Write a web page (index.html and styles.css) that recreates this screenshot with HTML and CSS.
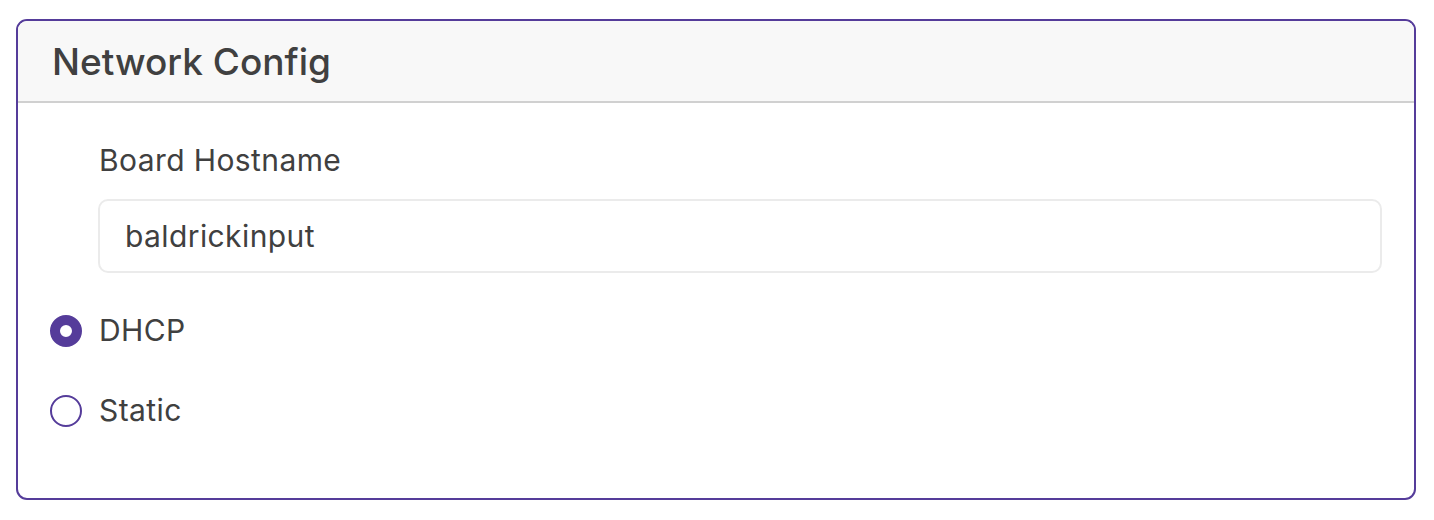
FILE: index.html
```html
<!DOCTYPE html>
<html lang="en">
<head>
  <meta charset="UTF-8" />
  <meta name="viewport" content="width=device-width, initial-scale=1.0"/>
  <title>Network Config</title>
  <link rel="stylesheet" href="styles.css">
</head>
<body>

  <div class="card">
    <div class="card-header">
      <h2>Network Config</h2>
    </div>

    <div class="card-body">
      <div class="field">
        <label for="hostname">Board Hostname</label>
        <input type="text" id="hostname" value="baldrickinput" />
      </div>

      <label class="radio">
        <input type="radio" name="mode" value="dhcp" checked />
        <span class="dot"></span>
        DHCP
      </label>

      <label class="radio">
        <input type="radio" name="mode" value="static" />
        <span class="dot"></span>
        Static
      </label>
    </div>
  </div>

</body>
</html>
```

FILE: styles.css
```css
:root {
  --accent: #553c9a;
  --text-color: #404040;
}
body {
  font-family: Inter, 'Noto Sans', sans-serif;
  color: var(--text-color);
  background: #fff;
  margin: 0;
  padding: 19px 18px 0 16px;
}
.card {
  border: 2px solid var(--accent);
  border-radius: 11px;
  overflow: hidden;
  height: 481px;
  box-sizing: border-box;
}
.card-header {
  background: #f8f8f8;
  border-bottom: 2px solid #d0d0d0;
  height: 80px;
  display: flex;
  align-items: center;
  padding: 0 34px;
}
.card-header h2 {
  margin: 0;
  font-size: 37px;
  font-weight: 500;
  letter-spacing: 0;
}
.card-body {
  padding: 35px 32px 0 32px;
  display: flex;
  flex-direction: column;
  gap: 35px;
  font-size: 30px;
  line-height: 45px;
  letter-spacing: 0.4px;
}
.field {
  margin-left: 48px;
  display: flex;
  flex-direction: column;
  gap: 16px;
}
.field label {
  margin-left: 1px;
}
.field input {
  height: 74px;
  box-sizing: border-box;
  border: 2px solid #ebebeb;
  border-radius: 10px;
  padding: 0 25px;
  font: inherit;
  letter-spacing: 0.4px;
  color: var(--text-color);
  outline: none;
}
.radio {
  display: flex;
  align-items: center;
  gap: 17px;
  cursor: pointer;
}
.radio input {
  display: none;
}
.dot {
  width: 32px;
  height: 32px;
  box-sizing: border-box;
  border: 2px solid var(--accent);
  border-radius: 50%;
}
.radio input:checked + .dot {
  border-width: 10.5px;
}
```
